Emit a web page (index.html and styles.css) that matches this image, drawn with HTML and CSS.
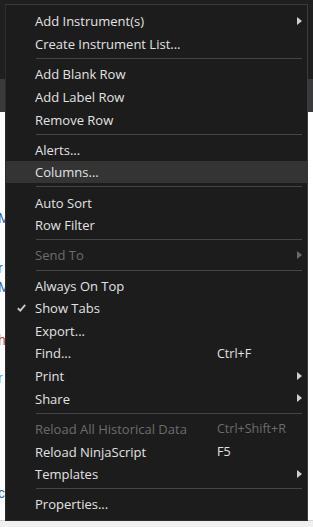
FILE: index.html
```html
<!DOCTYPE html>
<html lang="en">
<head>
	<meta charset="UTF-8">
	<title>Market Analyzer menu</title>
	<link rel="stylesheet" href="styles.css">
</head>
<body>
	<div class="page">
		<div class="title-bar"></div>
		<div class="tab-bar"></div>
		<div class="sheet">
			<span class="frag blue" style="top: 98px">M</span>
			<span class="frag blue" style="top: 148px">r</span>
			<span class="frag blue" style="top: 167px">M</span>
			<span class="frag red" style="top: 220px">h</span>
			<span class="frag cyan" style="top: 258px">r</span>
			<span class="frag blue" style="top: 373px">c</span>
		</div>
		<div class="status-bar"></div>
	</div>

	<div class="menu">
		<div class="item"><span class="icon"></span><span class="label">Add Instrument(s)</span><span class="key"></span><span class="sub"><i class="arrow"></i></span></div>
		<div class="item"><span class="icon"></span><span class="label">Create Instrument List...</span><span class="key"></span><span class="sub"></span></div>
		<div class="sep"></div>
		<div class="item"><span class="icon"></span><span class="label">Add Blank Row</span><span class="key"></span><span class="sub"></span></div>
		<div class="item"><span class="icon"></span><span class="label">Add Label Row</span><span class="key"></span><span class="sub"></span></div>
		<div class="item"><span class="icon"></span><span class="label">Remove Row</span><span class="key"></span><span class="sub"></span></div>
		<div class="sep"></div>
		<div class="item"><span class="icon"></span><span class="label">Alerts...</span><span class="key"></span><span class="sub"></span></div>
		<div class="item hover"><span class="icon"></span><span class="label">Columns...</span><span class="key"></span><span class="sub"></span></div>
		<div class="sep"></div>
		<div class="item"><span class="icon"></span><span class="label">Auto Sort</span><span class="key"></span><span class="sub"></span></div>
		<div class="item"><span class="icon"></span><span class="label">Row Filter</span><span class="key"></span><span class="sub"></span></div>
		<div class="sep"></div>
		<div class="item disabled"><span class="icon"></span><span class="label">Send To</span><span class="key"></span><span class="sub"><i class="arrow"></i></span></div>
		<div class="sep"></div>
		<div class="item"><span class="icon"></span><span class="label">Always On Top</span><span class="key"></span><span class="sub"></span></div>
		<div class="item"><span class="icon"><svg class="check" width="9" height="8" viewBox="0 0 9 8"><path d="M0.8 4.2 L3.3 6.6 L8.2 0.9" fill="none" stroke="#c8c8c8" stroke-width="1.9"/></svg></span><span class="label">Show Tabs</span><span class="key"></span><span class="sub"></span></div>
		<div class="item"><span class="icon"></span><span class="label">Export...</span><span class="key"></span><span class="sub"></span></div>
		<div class="item"><span class="icon"></span><span class="label">Find...</span><span class="key">Ctrl+F</span><span class="sub"></span></div>
		<div class="item"><span class="icon"></span><span class="label">Print</span><span class="key"></span><span class="sub"><i class="arrow"></i></span></div>
		<div class="item"><span class="icon"></span><span class="label">Share</span><span class="key"></span><span class="sub"><i class="arrow"></i></span></div>
		<div class="sep"></div>
		<div class="item disabled"><span class="icon"></span><span class="label">Reload All Historical Data</span><span class="key">Ctrl+Shift+R</span><span class="sub"></span></div>
		<div class="item"><span class="icon"></span><span class="label">Reload NinjaScript</span><span class="key">F5</span><span class="sub"></span></div>
		<div class="item"><span class="icon"></span><span class="label">Templates</span><span class="key"></span><span class="sub"><i class="arrow"></i></span></div>
		<div class="sep"></div>
		<div class="item"><span class="icon"></span><span class="label">Properties...</span><span class="key"></span><span class="sub"></span></div>
	</div>
</body>
</html>
```

FILE: styles.css
```css
html, body {
	margin: 0;
	padding: 0;
}

body {
	width: 313px;
	height: 527px;
	overflow: hidden;
	position: relative;
	background: #f0f0f0;
	font-family: "Open Sans", Lato, sans-serif;
}

.page {
	display: flex;
	flex-direction: column;
	height: 527px;
}

.title-bar {
	height: 79px;
	background: #1f1f1f;
}

.tab-bar {
	height: 33px;
	background: #3a3a3d;
}

.sheet {
	height: 408px;
	background: #fff;
	position: relative;
	border-bottom: 1px solid #d6d6d6;
}

.frag {
	position: absolute;
	left: -2px;
	font-size: 14px;
	font-family: "Liberation Sans", sans-serif;
}

.blue { color: #2f5fa8; }
.red { color: #d33a3a; }
.cyan { color: #4aa3d8; }

.status-bar {
	flex: 1;
	background: #f0f0f0;
}

/* context menu */
.menu {
	position: absolute;
	left: 5px;
	top: 4px;
	width: 303px;
	height: 517px;
	padding: 4.7px 0;
	box-sizing: border-box;
	background: #1c1c1c;
	border: 1px solid #3b3b3b;
	border-left-color: #2c2c2c;
	border-bottom-color: #2a2a2a;
	display: flex;
	flex-direction: column;
}

.item {
	display: grid;
	grid-template-columns: 29px 182px 1fr 17px;
	align-items: center;
	height: 22.6px;
	flex: none;
	color: #e2e2e2;
	font-size: 13px;
	white-space: nowrap;
}

.label {
	padding-top: 1px;
}

.item.hover {
	background: #343434;
}

.item.disabled {
	color: #6c6c6c;
}

.icon {
	display: flex;
	justify-content: center;
	padding-left: 1px;
}

.key {
	font-size: 12.5px;
	padding-top: 1px;
}

.sub {
	display: flex;
	align-items: center;
	padding-left: 7px;
}

.arrow {
	display: block;
	width: 0;
	height: 0;
	border-top: 4px solid transparent;
	border-bottom: 4px solid transparent;
	border-left: 5px solid #cfcfcf;
}

.disabled .arrow {
	border-left-color: #6a6a6a;
}

.sep {
	flex: none;
	height: 7.66px;
	display: flex;
	align-items: center;
	padding: 0 5px 0 30px;
}

.sep::after {
	content: "";
	flex: 1;
	height: 1px;
	background: #454545;
}
```
